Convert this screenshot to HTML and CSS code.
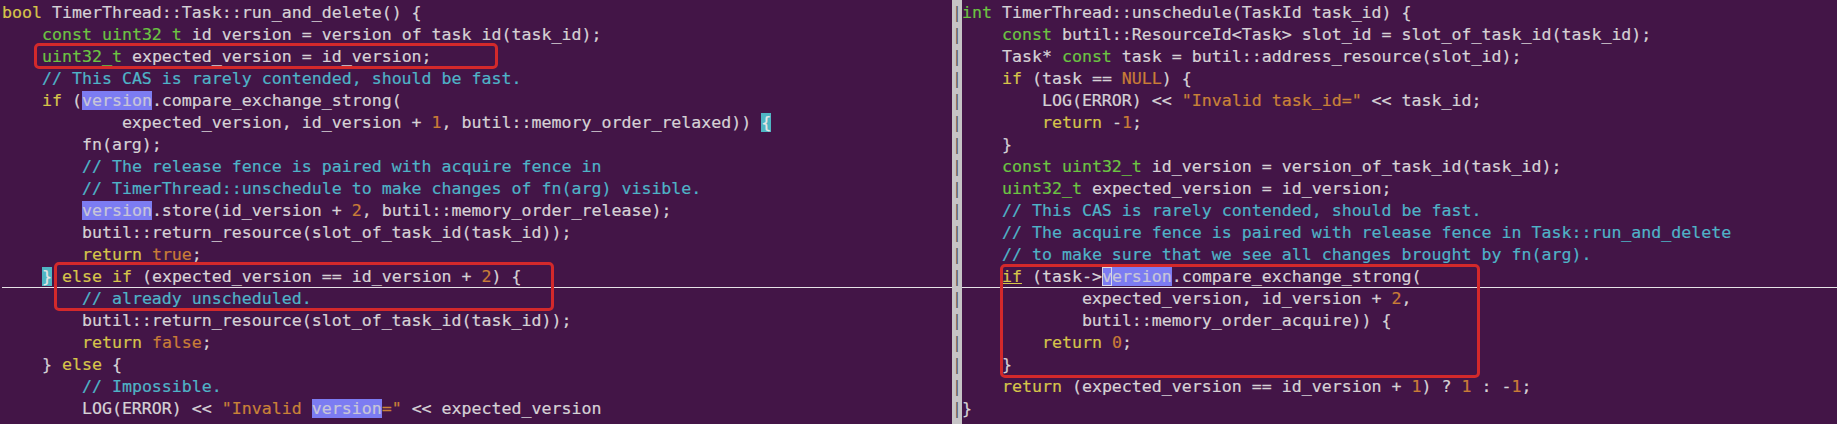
FILE: index.html
```html
<!DOCTYPE html>
<html>
<head>
<meta charset="utf-8">
<link rel="stylesheet" href="styles.css">
</head>
<body>
<div class="screen">
  <div class="pane left">
    <div class="ln"><span class="kw">bool</span> TimerThread::Task::run_and_delete() {</div>
    <div class="ln">    <span class="ty">const</span> <span class="ty">uint32_t</span> id_version = version_of_task_id(task_id);</div>
    <div class="ln">    <span class="ty">uint32_t</span> expected_version = id_version;</div>
    <div class="ln">    <span class="cm">// This CAS is rarely contended, should be fast.</span></div>
    <div class="ln">    <span class="kw">if</span> (<span class="hl">version</span>.compare_exchange_strong(</div>
    <div class="ln">            expected_version, id_version + <span class="nu">1</span>, butil::memory_order_relaxed)) <span class="mp">{</span></div>
    <div class="ln">        fn(arg);</div>
    <div class="ln">        <span class="cm">// The release fence is paired with acquire fence in</span></div>
    <div class="ln">        <span class="cm">// TimerThread::unschedule to make changes of fn(arg) visible.</span></div>
    <div class="ln">        <span class="hl">version</span>.store(id_version + <span class="nu">2</span>, butil::memory_order_release);</div>
    <div class="ln">        butil::return_resource(slot_of_task_id(task_id));</div>
    <div class="ln">        <span class="kw">return</span> <span class="nu">true</span>;</div>
    <div class="ln cur">    <span class="mp">}</span> <span class="kw">else</span> <span class="kw">if</span> (expected_version == id_version + <span class="nu">2</span>) {</div>
    <div class="ln">        <span class="cm">// already unscheduled.</span></div>
    <div class="ln">        butil::return_resource(slot_of_task_id(task_id));</div>
    <div class="ln">        <span class="kw">return</span> <span class="nu">false</span>;</div>
    <div class="ln">    } <span class="kw">else</span> {</div>
    <div class="ln">        <span class="cm">// Impossible.</span></div>
    <div class="ln">        LOG(ERROR) &lt;&lt; <span class="st">"Invalid <span class="hl">version</span>="</span> &lt;&lt; expected_version</div>
  </div>
  <div class="sep">
    <div class="ln">|</div><div class="ln">|</div><div class="ln">|</div><div class="ln">|</div><div class="ln">|</div>
    <div class="ln">|</div><div class="ln">|</div><div class="ln">|</div><div class="ln">|</div><div class="ln">|</div>
    <div class="ln">|</div><div class="ln">|</div><div class="ln">|</div><div class="ln">|</div><div class="ln">|</div>
    <div class="ln">|</div><div class="ln">|</div><div class="ln">|</div><div class="ln">|</div>
  </div>
  <div class="pane right">
    <div class="ln"><span class="ty">int</span> TimerThread::unschedule(TaskId task_id) {</div>
    <div class="ln">    <span class="ty">const</span> butil::ResourceId&lt;Task&gt; slot_id = slot_of_task_id(task_id);</div>
    <div class="ln">    Task* <span class="ty">const</span> task = butil::address_resource(slot_id);</div>
    <div class="ln">    <span class="kw">if</span> (task == <span class="nu">NULL</span>) {</div>
    <div class="ln">        LOG(ERROR) &lt;&lt; <span class="st">"Invalid task_id="</span> &lt;&lt; task_id;</div>
    <div class="ln">        <span class="kw">return</span> -<span class="nu">1</span>;</div>
    <div class="ln">    }</div>
    <div class="ln">    <span class="ty">const</span> <span class="ty">uint32_t</span> id_version = version_of_task_id(task_id);</div>
    <div class="ln">    <span class="ty">uint32_t</span> expected_version = id_version;</div>
    <div class="ln">    <span class="cm">// This CAS is rarely contended, should be fast.</span></div>
    <div class="ln">    <span class="cm">// The acquire fence is paired with release fence in Task::run_and_delete</span></div>
    <div class="ln">    <span class="cm">// to make sure that we see all changes brought by fn(arg).</span></div>
    <div class="ln cur">    <span class="kw ul">if</span> (task-&gt;<span class="hl"><span class="cursor">v</span>ersion</span>.compare_exchange_strong(</div>
    <div class="ln">            expected_version, id_version + <span class="nu">2</span>,</div>
    <div class="ln">            butil::memory_order_acquire)) {</div>
    <div class="ln">        <span class="kw">return</span> <span class="nu">0</span>;</div>
    <div class="ln">    }</div>
    <div class="ln">    <span class="kw">return</span> (expected_version == id_version + <span class="nu">1</span>) ? <span class="nu">1</span> : -<span class="nu">1</span>;</div>
    <div class="ln">}</div>
  </div>
  <div class="box box1"></div>
  <div class="box box2"></div>
  <div class="box box3"></div>
</div>
</body>
</html>
```

FILE: styles.css
```css
html, body {
  margin: 0;
  padding: 0;
  background: #431547;
}
.screen {
  position: relative;
  display: flex;
  width: 1837px;
  height: 424px;
  overflow: hidden;
  background: #431547;
  font-family: "DejaVu Sans Mono", "Liberation Mono", monospace;
  font-size: 16.6px;
  color: #d6d2d6;
  -webkit-text-stroke: 0.2px currentColor;
}
.pane {
  padding-top: 2px;
}
.left {
  width: 950px;
  padding-left: 2px;
  flex: none;
}
.right {
  flex: 1;
}
.ln {
  height: 22px;
  line-height: 22px;
  white-space: pre;
}
.cur {
  box-shadow: inset 0 -1px 0 #e6e2e6;
}
.sep {
  width: 10px;
  flex: none;
  padding-top: 2px;
  background: #c6c4c6;
  color: #5a5a5a;
  -webkit-text-stroke: 0;
}
.sep .ln {
  text-align: center;
}
.kw { color: #d6c54a; }
.ty { color: #6cc443; }
.cm { color: #4fb3c7; }
.nu { color: #c97d37; }
.st { color: #c98238; }
.hl {
  background: #7c7cf2;
  color: #c8c6d8;
}
.mp {
  background: #4fb5c3;
  color: #e6e6e6;
}
.ul {
  text-decoration: underline;
}
.cursor {
  box-shadow: inset 0 0 0 1px #d8d8e8;
}
.box {
  position: absolute;
  border: 3px solid #d3292b;
  border-radius: 5px;
  box-sizing: border-box;
}
.box1 {
  left: 34px;
  top: 43px;
  width: 464px;
  height: 26px;
}
.box2 {
  left: 54px;
  top: 262px;
  width: 500px;
  height: 49px;
}
.box3 {
  left: 1000px;
  top: 264px;
  width: 480px;
  height: 114px;
}
```
